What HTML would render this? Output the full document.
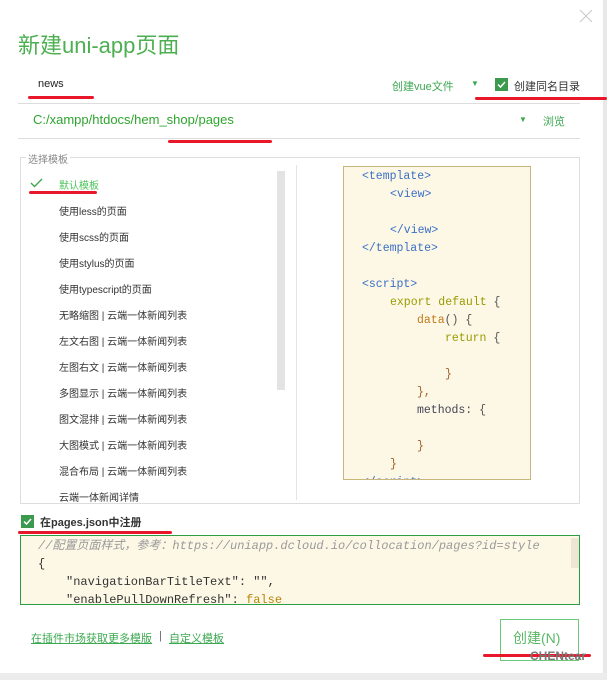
<!DOCTYPE html>
<html><head><meta charset="utf-8"><style>
*{margin:0;padding:0;box-sizing:border-box}
body{width:607px;height:680px;background:#fff;position:relative;overflow:hidden;font-family:"Liberation Sans","Noto Sans CJK SC",sans-serif;}
.a{position:absolute;white-space:nowrap}
.g{color:#3ca850}
.mono{font-family:"Liberation Mono","Noto Sans CJK SC",monospace}
.li{position:absolute;left:59px;font-size:10px;color:#333}
.c{position:absolute;font-size:11.5px;line-height:14px}
.red{position:absolute;height:3px;background:#e8182a;border-radius:2px}
</style></head><body>
<div class="a" style="left:603px;top:0;width:4px;height:680px;background:#e8e8e8"></div>
<div class="a" style="left:0;top:673px;width:607px;height:7px;background:#ececec"></div>
<svg class="a" style="left:579px;top:9px" width="14" height="14"><path d="M1 1L13 13M13 1L1 13" stroke="#c8c8c8" stroke-width="1"/></svg>
<div class="a g" style="left:18px;top:28px;font-size:22px;color:#4caf50">新建uni-app页面</div>

<div class="a" style="left:38px;top:78px;font-size:11px;color:#222">news</div>
<div class="a g" style="left:392px;top:78px;font-size:11px">创建vue文件</div>
<div class="a" style="left:471px;top:79px;font-size:8px;color:#3ca850">▼</div>
<div class="a" style="left:495px;top:78px;width:13px;height:13px;background:#3c9a4e"></div>
<svg class="a" style="left:495px;top:78px" width="13" height="13"><path d="M3 6.5L5.5 9L10 4" stroke="#fff" stroke-width="1.5" fill="none"/></svg>
<div class="a" style="left:514px;top:78px;font-size:11px;color:#333">创建同名目录</div>
<div class="a" style="left:18px;top:103px;width:562px;height:1px;background:#ddd"></div>
<div class="red" style="left:28px;top:96px;width:66px"></div>
<div class="red" style="left:475px;top:97px;width:132px"></div>

<div class="a g" style="left:33px;top:112px;font-size:13px;color:#2ea52e">C:/xampp/htdocs/hem_shop/pages</div>
<div class="a" style="left:519px;top:115px;font-size:8px;color:#3ca850">▼</div>
<div class="a g" style="left:543px;top:113px;font-size:11px">浏览</div>
<div class="a" style="left:18px;top:138px;width:562px;height:1px;background:#ddd"></div>
<div class="red" style="left:168px;top:140px;width:104px"></div>

<div class="a" style="left:20px;top:157px;width:560px;height:347px;border:1px solid #ddd"></div>
<div class="a" style="left:26px;top:151px;font-size:10px;color:#888;background:#fff;padding:0 2px">选择模板</div>
<svg class="a" style="left:30px;top:178px" width="13" height="10"><path d="M1 5L4.5 8.5L12 1" stroke="#3ca850" stroke-width="1.4" fill="none"/></svg>
<div class="li g" style="top:177px;color:#4cc45a">默认模板</div>
<div class="red" style="left:29px;top:191px;width:68px"></div>
<div class="li" style="top:203px">使用less的页面</div>
<div class="li" style="top:229px">使用scss的页面</div>
<div class="li" style="top:255px">使用stylus的页面</div>
<div class="li" style="top:281px">使用typescript的页面</div>
<div class="li" style="top:307px">无略缩图 | 云端一体新闻列表</div>
<div class="li" style="top:333px">左文右图 | 云端一体新闻列表</div>
<div class="li" style="top:359px">左图右文 | 云端一体新闻列表</div>
<div class="li" style="top:385px">多图显示 | 云端一体新闻列表</div>
<div class="li" style="top:411px">图文混排 | 云端一体新闻列表</div>
<div class="li" style="top:437px">大图模式 | 云端一体新闻列表</div>
<div class="li" style="top:463px">混合布局 | 云端一体新闻列表</div>
<div class="li" style="top:489px">云端一体新闻详情</div>
<div class="a" style="left:277px;top:171px;width:8px;height:219px;background:#e3e3e3"></div>
<div class="a" style="left:296px;top:165px;width:1px;height:335px;background:#e4e4e4"></div>

<div class="a mono" style="left:343px;top:166px;width:188px;height:314px;background:#fdf8e6;border:1px solid #c8b67a;overflow:hidden">
<div class="c" style="left:18px;top:3px;color:#3a6fc4">&lt;template&gt;</div>
<div class="c" style="left:46px;top:21px;color:#3a6fc4">&lt;view&gt;</div>
<div class="c" style="left:46px;top:57px;color:#3a6fc4">&lt;/view&gt;</div>
<div class="c" style="left:18px;top:75px;color:#3a6fc4">&lt;/template&gt;</div>
<div class="c" style="left:18px;top:111px;color:#3a6fc4">&lt;script&gt;</div>
<div class="c" style="left:46px;top:129px;color:#9a9a00">export default <span style="color:#555">{</span></div>
<div class="c" style="left:73px;top:147px;color:#c07a18">data<span style="color:#555">() {</span></div>
<div class="c" style="left:101px;top:165px;color:#9a9a00">return <span style="color:#555">{</span></div>
<div class="c" style="left:101px;top:201px;color:#a0622a">}</div>
<div class="c" style="left:73px;top:219px;color:#a0622a">},</div>
<div class="c" style="left:73px;top:237px;color:#445">methods: <span style="color:#555">{</span></div>
<div class="c" style="left:73px;top:273px;color:#a0622a">}</div>
<div class="c" style="left:46px;top:291px;color:#a0622a">}</div>
<div class="c" style="left:18px;top:309px;color:#3a6fc4">&lt;/script&gt;</div>
</div>

<div class="a" style="left:21px;top:515px;width:13px;height:13px;background:#3c9a4e"></div>
<svg class="a" style="left:21px;top:515px" width="13" height="13"><path d="M3 6.5L5.5 9L10 4" stroke="#fff" stroke-width="1.5" fill="none"/></svg>
<div class="a" style="left:40px;top:514px;font-size:11px;font-weight:bold;color:#333">在pages.json中注册</div>
<div class="red" style="left:18px;top:531px;width:154px"></div>

<div class="a mono" style="left:20px;top:535px;width:560px;height:70px;background:#fdf8e6;border:1px solid #2a9d45;overflow:hidden">
<div class="c" style="left:17px;top:3px;color:#999;font-style:italic;font-size:12px">//配置页面样式，参考：https://uniapp.dcloud.io/collocation/pages?id=style</div>
<div class="c" style="left:17px;top:21px;color:#333;font-size:12px">{</div>
<div class="c" style="left:45px;top:39px;color:#333;font-size:12px">"navigationBarTitleText": "",</div>
<div class="c" style="left:45px;top:57px;color:#333;font-size:12px">"enablePullDownRefresh": <span style="color:#b8860b">false</span></div>
<div class="a" style="left:550px;top:2px;width:8px;height:30px;background:#ece6d2"></div>
</div>

<div class="a g" style="left:31px;top:630px;font-size:11px;text-decoration:underline">在插件市场获取更多模版</div>
<div class="a" style="left:159px;top:630px;font-size:11px;color:#666">|</div>
<div class="a g" style="left:169px;top:630px;font-size:11px;text-decoration:underline">自定义模板</div>
<div class="a" style="left:500px;top:619px;width:79px;height:42px;border:1px solid #6fc97a"></div>
<div class="a g" style="left:513px;top:628px;font-size:14px;color:#5bb866">创建(N)</div>
<div class="red" style="left:483px;top:654px;width:108px"></div>
<div class="a" style="left:530px;top:649px;font-size:12px;color:#777;font-weight:bold">CHENtear</div>
</body></html>
